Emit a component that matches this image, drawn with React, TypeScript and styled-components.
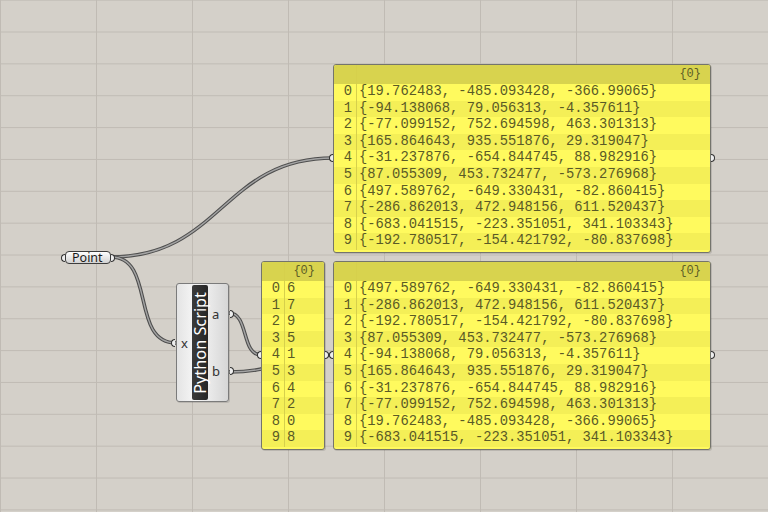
import React from "react";
import styled, { createGlobalStyle } from "styled-components";

const GlobalStyle = createGlobalStyle`
  html, body {
    margin: 0;
    padding: 0;
  }
  body {
    width: 768px;
    height: 512px;
    overflow: hidden;
    background: #d4d0c9;
  }
`;

const Canvas = styled.div`
  position: relative;
  z-index: 0;
  width: 768px;
  height: 512px;
  overflow: hidden;
  background-color: #d4d0c9;
  background-image: linear-gradient(to right, #c0bbb4 1px, transparent 1px),
    linear-gradient(to bottom, #c0bbb4 1px, transparent 1px);
  background-size: 96px 100%, 100% 31.87px;
  background-position: 0 0, 0 31.5px;
`;

const WireLayer = styled.svg`
  position: absolute;
  left: 0;
  top: 0;
  width: 768px;
  height: 512px;
  pointer-events: none;
`;

// grip = little half round on the edge of a node
const Grip = styled.span<{ $side: "left" | "right" }>`
  position: absolute;
  top: 50%;
  width: 3px;
  height: 6px;
  margin-top: -4px;
  border: 1px solid #2f2f2f;
  background: #eeeeee;
  ${(p) =>
    p.$side === "left"
      ? "left: -5px; border-right: none; border-radius: 4px 0 0 4px;"
      : "right: -5px; border-left: none; border-radius: 0 4px 4px 0;"}
`;

/* ---------- panels ---------- */

const PanelBox = styled.div<{ $left: number; $top: number; $width: number }>`
  position: absolute;
  left: ${(p) => p.$left}px;
  top: ${(p) => p.$top}px;
  width: ${(p) => p.$width}px;
  box-sizing: border-box;
  border: 1px solid #74746c;
  border-radius: 3px;
  background: #fffa5e;
  padding-bottom: 2px;
  box-shadow: 1px 1px 0 rgba(0, 0, 0, 0.12);
  font-family: "Liberation Mono", "DejaVu Sans Mono", monospace;
  color: #5a5a26;
`;

const PanelHeader = styled.div<{ $indexW: number }>`
  display: grid;
  grid-template-columns: ${(p) => p.$indexW}px 1fr;
  height: 19px;
  background: #d8d34e;
  border-radius: 2px 2px 0 0;
`;

const HeaderLabel = styled.div`
  text-align: right;
  padding-right: 9px;
  font-size: 12px;
  line-height: 19px;
  color: #5e5e26;
`;

const Row = styled.div<{ $indexW: number; $alt: boolean }>`
  display: grid;
  grid-template-columns: ${(p) => p.$indexW}px 1fr;
  height: 16.6px;
  background: ${(p) => (p.$alt ? "#f4ef57" : "#fffa5e")};
  font-size: 13.8px;
  line-height: 16.6px;
`;

const IndexCell = styled.div`
  box-sizing: border-box;
  text-align: right;
  padding-right: 4px;
  border-right: 1px solid #d6d04c;
`;

const ValueCell = styled.div`
  padding-left: 2px;
  white-space: nowrap;
  overflow: hidden;
`;

type PanelProps = {
  left: number;
  top: number;
  width: number;
  indexW: number;
  rows: string[];
};

function DataPanel({ left, top, width, indexW, rows }: PanelProps) {
  return (
    <PanelBox $left={left} $top={top} $width={width}>
      <PanelHeader $indexW={indexW}>
        <IndexCell />
        <HeaderLabel>{"{0}"}</HeaderLabel>
      </PanelHeader>
      {rows.map((r, i) => (
        <Row key={i} $indexW={indexW} $alt={i % 2 === 1}>
          <IndexCell>{i}</IndexCell>
          <ValueCell>{r}</ValueCell>
        </Row>
      ))}
      <Grip $side="left" />
      <Grip $side="right" />
    </PanelBox>
  );
}

/* ---------- point param ---------- */

const ParamCapsule = styled.div`
  position: absolute;
  left: 65px;
  top: 251px;
  width: 46px;
  height: 13px;
  box-sizing: border-box;
  border: 1px solid #3c3c3c;
  border-radius: 4px;
  background: linear-gradient(to bottom, #ffffff, #d2d2d2);
  padding-left: 6px;
  font-family: "Noto Sans", "Open Sans", sans-serif;
  font-size: 12.5px;
  line-height: 11px;
  color: #1a1a1a;
`;

/* ---------- python component ---------- */

const ComponentBox = styled.div`
  position: absolute;
  left: 176px;
  top: 283px;
  width: 53px;
  height: 119px;
  box-sizing: border-box;
  display: flex;
  padding: 1px 0;
  border: 1px solid #7b7b7b;
  border-radius: 3px;
  background: linear-gradient(to right, #e4e4e4, #f6f6f6 35%, #e9e9e9 65%, #d6d6d6);
  box-shadow: 1px 1px 0 rgba(0, 0, 0, 0.12);
  font-family: "Noto Sans", "Open Sans", sans-serif;
  color: #333333;
`;

const PortColumn = styled.div<{ $width: number }>`
  display: flex;
  flex-direction: column;
  width: ${(p) => p.$width}px;
`;

const Port = styled.div<{ $align: "center" | "flex-start" }>`
  position: relative;
  flex: 1;
  display: flex;
  align-items: center;
  justify-content: ${(p) => p.$align};
  padding-left: ${(p) => (p.$align === "flex-start" ? "4px" : "0")};
  font-size: 13px;
  line-height: 14px;
`;

const PortGrip = styled(Grip)`
  ${(p) => (p.$side === "left" ? "left: -6px;" : "right: -6px;")}
`;

const NameBar = styled.div`
  width: 16px;
  display: flex;
  align-items: center;
  justify-content: center;
  border-radius: 2px;
  background: linear-gradient(to right, #3a3a3a, #262626);
`;

const NameText = styled.span`
  writing-mode: vertical-rl;
  transform: rotate(180deg);
  color: #ffffff;
  font-size: 16.3px;
  line-height: 16px;
  white-space: nowrap;
`;

/* ---------- data ---------- */

const points = [
  "{19.762483, -485.093428, -366.99065}",
  "{-94.138068, 79.056313, -4.357611}",
  "{-77.099152, 752.694598, 463.301313}",
  "{165.864643, 935.551876, 29.319047}",
  "{-31.237876, -654.844745, 88.982916}",
  "{87.055309, 453.732477, -573.276968}",
  "{497.589762, -649.330431, -82.860415}",
  "{-286.862013, 472.948156, 611.520437}",
  "{-683.041515, -223.351051, 341.103343}",
  "{-192.780517, -154.421792, -80.837698}",
];

const order = [6, 7, 9, 5, 1, 3, 4, 2, 0, 8];

const wires = [
  "M111,257 C221,257 223,158 333,158",
  "M111,257 C156,257 130,343 176,343",
  "M229,313 C249,313 241,355 261,355",
  "M229,372 C281,372 281,355 333,355",
];

export default function App() {
  return (
    <>
      <GlobalStyle />
      <Canvas>
        <WireLayer viewBox="0 0 768 512">
          {wires.map((d, i) => (
            <g key={i} fill="none">
              <path d={d} stroke="#4e4e4e" strokeWidth={3.6} />
              <path d={d} stroke="#a4a4a4" strokeWidth={1.4} />
            </g>
          ))}
        </WireLayer>

        <ParamCapsule>
          Point
          <Grip $side="left" />
          <Grip $side="right" />
        </ParamCapsule>

        <ComponentBox>
          <PortColumn $width={15}>
            <Port $align="center">
              x
              <PortGrip $side="left" />
            </Port>
          </PortColumn>
          <NameBar>
            <NameText>Python Script</NameText>
          </NameBar>
          <PortColumn $width={20}>
            <Port $align="flex-start">
              a
              <PortGrip $side="right" />
            </Port>
            <Port $align="flex-start">
              b
              <PortGrip $side="right" />
            </Port>
          </PortColumn>
        </ComponentBox>

        <DataPanel left={333} top={64} width={378} indexW={23} rows={points} />
        <DataPanel
          left={261}
          top={261}
          width={64}
          indexW={23}
          rows={order.map((n) => String(n))}
        />
        <DataPanel
          left={333}
          top={261}
          width={378}
          indexW={23}
          rows={order.map((n) => points[n])}
        />
      </Canvas>
    </>
  );
}
